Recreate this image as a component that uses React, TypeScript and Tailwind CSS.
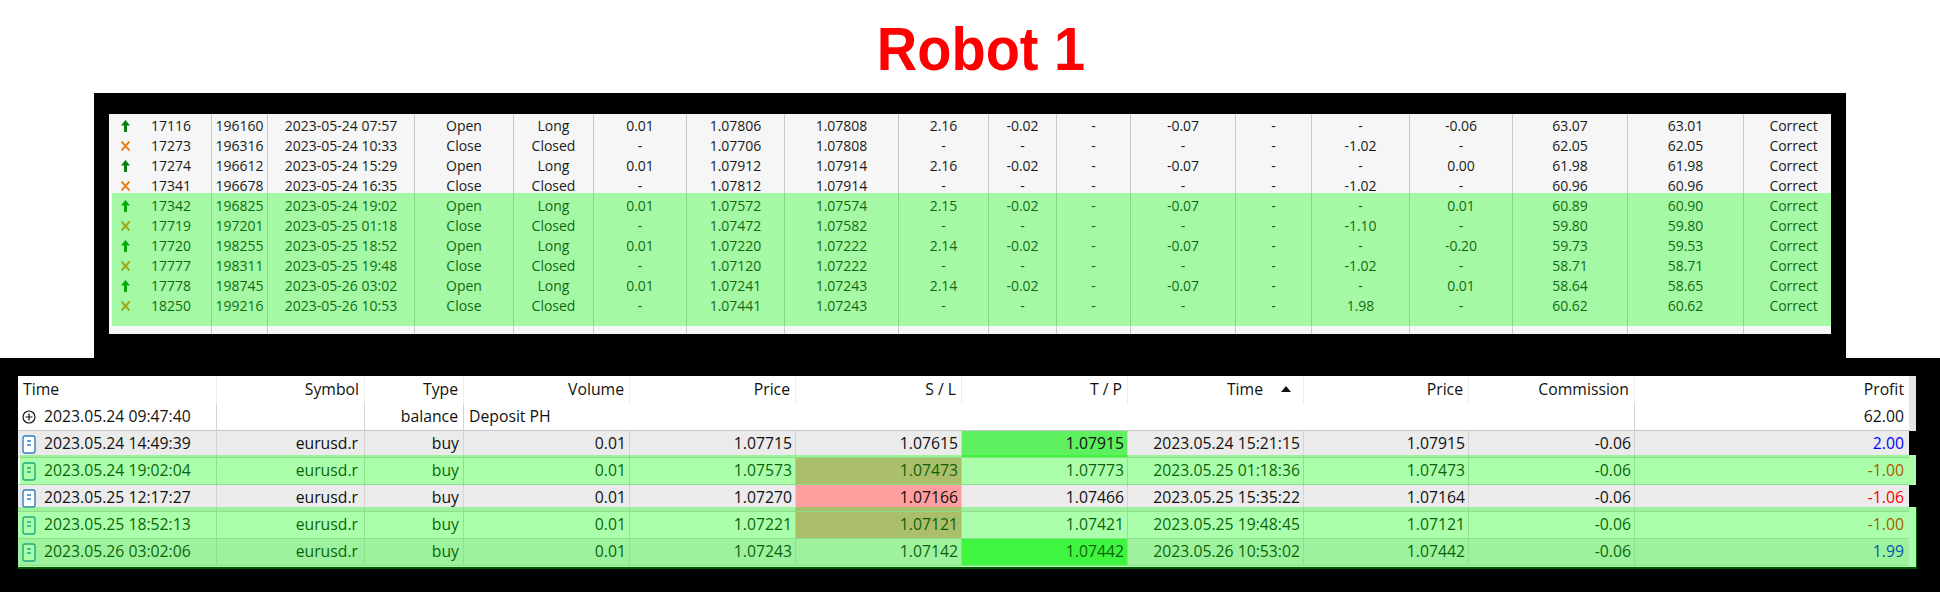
const topCols =
  'grid grid-cols-[103px_56px_147px_99px_80px_93px_98px_114px_90px_68px_74px_105px_76px_98px_103px_115px_116px_100px]';
const bottomCols =
  'grid grid-cols-[199px_148px_99px_166px_166px_166px_166px_176px_165px_166px_274px]';

const orders = [
  ['17116', '196160', '2023-05-24 07:57', 'Open', 'Long', '0.01', '1.07806', '1.07808', '2.16', '-0.02', '-', '-0.07', '-', '-', '-0.06', '63.07', '63.01', 'Correct'],
  ['17273', '196316', '2023-05-24 10:33', 'Close', 'Closed', '-', '1.07706', '1.07808', '-', '-', '-', '-', '-', '-1.02', '-', '62.05', '62.05', 'Correct'],
  ['17274', '196612', '2023-05-24 15:29', 'Open', 'Long', '0.01', '1.07912', '1.07914', '2.16', '-0.02', '-', '-0.07', '-', '-', '0.00', '61.98', '61.98', 'Correct'],
  ['17341', '196678', '2023-05-24 16:35', 'Close', 'Closed', '-', '1.07812', '1.07914', '-', '-', '-', '-', '-', '-1.02', '-', '60.96', '60.96', 'Correct'],
  ['17342', '196825', '2023-05-24 19:02', 'Open', 'Long', '0.01', '1.07572', '1.07574', '2.15', '-0.02', '-', '-0.07', '-', '-', '0.01', '60.89', '60.90', 'Correct'],
  ['17719', '197201', '2023-05-25 01:18', 'Close', 'Closed', '-', '1.07472', '1.07582', '-', '-', '-', '-', '-', '-1.10', '-', '59.80', '59.80', 'Correct'],
  ['17720', '198255', '2023-05-25 18:52', 'Open', 'Long', '0.01', '1.07220', '1.07222', '2.14', '-0.02', '-', '-0.07', '-', '-', '-0.20', '59.73', '59.53', 'Correct'],
  ['17777', '198311', '2023-05-25 19:48', 'Close', 'Closed', '-', '1.07120', '1.07222', '-', '-', '-', '-', '-', '-1.02', '-', '58.71', '58.71', 'Correct'],
  ['17778', '198745', '2023-05-26 03:02', 'Open', 'Long', '0.01', '1.07241', '1.07243', '2.14', '-0.02', '-', '-0.07', '-', '-', '0.01', '58.64', '58.65', 'Correct'],
  ['18250', '199216', '2023-05-26 10:53', 'Close', 'Closed', '-', '1.07441', '1.07243', '-', '-', '-', '-', '-', '1.98', '-', '60.62', '60.62', 'Correct'],
];

const deals = [
  { time: '2023.05.24 14:49:39', price: '1.07715', sl: '1.07615', tp: '1.07915', closed: '2023.05.24 15:21:15', out: '1.07915', profit: '2.00', hit: 'tp', gray: true },
  { time: '2023.05.24 19:02:04', price: '1.07573', sl: '1.07473', tp: '1.07773', closed: '2023.05.25 01:18:36', out: '1.07473', profit: '-1.00', hit: 'sl', gray: false },
  { time: '2023.05.25 12:17:27', price: '1.07270', sl: '1.07166', tp: '1.07466', closed: '2023.05.25 15:35:22', out: '1.07164', profit: '-1.06', hit: 'sl', gray: true },
  { time: '2023.05.25 18:52:13', price: '1.07221', sl: '1.07121', tp: '1.07421', closed: '2023.05.25 19:48:45', out: '1.07121', profit: '-1.00', hit: 'sl', gray: false },
  { time: '2023.05.26 03:02:06', price: '1.07243', sl: '1.07142', tp: '1.07442', closed: '2023.05.26 10:53:02', out: '1.07442', profit: '1.99', hit: 'tp', gray: true },
];

function UpArrow() {
  return (
    <svg width="9" height="12" viewBox="0 0 9 12" className="shrink-0">
      <path d="M4.5 0 L9 5.5 L6 5.5 L6 12 L3 12 L3 5.5 L0 5.5 Z" fill="#0a7d0a" />
    </svg>
  );
}

function CrossIcon() {
  return (
    <svg width="9" height="10" viewBox="0 0 9 10" className="shrink-0">
      <path d="M0.5 0.5 L8.5 9.5 M8.5 0.5 L0.5 9.5" stroke="#e8821e" strokeWidth="2" fill="none" />
    </svg>
  );
}

function DealIcon() {
  return (
    <svg width="14" height="19" viewBox="0 0 14 19" className="shrink-0">
      <rect x="1" y="1" width="12" height="17" rx="2" fill="#ffffff" stroke="#2f7fc1" strokeWidth="1.4" />
      <path d="M5 6 H9 M5 10 H9" stroke="#2f7fc1" strokeWidth="1.4" />
    </svg>
  );
}

function BalanceIcon() {
  return (
    <svg width="14" height="14" viewBox="0 0 14 14" className="shrink-0">
      <circle cx="7" cy="7" r="6" fill="none" stroke="#111111" strokeWidth="1.2" />
      <path d="M3.5 7 H10.5 M7 3.5 V10.5" stroke="#111111" strokeWidth="1.2" />
    </svg>
  );
}

function Spacer({ height }: { height: string }) {
  return (
    <div className={`${topCols} ${height}`}>
      {Array.from({ length: 18 }).map((_, i) => (
        <div key={i} className="border-r border-[#c8c8c8]" />
      ))}
    </div>
  );
}

function OrderRow({ row }: { row: string[] }) {
  const [id, ...rest] = row;
  return (
    <div className={`${topCols} h-5 text-[14px] leading-5 text-[#1a1a1a]`}>
      <div className="flex items-center border-r border-[#c8c8c8] pl-[12px]">
        {row[3] === 'Open' ? <UpArrow /> : <CrossIcon />}
        <span className="ml-[21px]">{id}</span>
      </div>
      {rest.map((cell, i) => (
        <div key={i} className="border-r border-[#c8c8c8] text-center whitespace-nowrap">
          {cell}
        </div>
      ))}
    </div>
  );
}

function Num({
  children,
  className = '',
  pad = 'pr-[5px]',
}: {
  children?: React.ReactNode;
  className?: string;
  pad?: string;
}) {
  return (
    <div className={`flex items-center justify-end border-r border-[#d4d4d4] whitespace-nowrap ${pad} ${className}`}>
      {children}
    </div>
  );
}

function DealRow({ deal }: { deal: (typeof deals)[number] }) {
  const hitColor = deal.hit === 'tp' ? 'bg-[#5ef05e]' : 'bg-[#ff9e9e]';
  const profitColor = deal.profit.startsWith('-') ? 'text-[#ff0000]' : 'text-[#0000ff]';
  return (
    <div className={`${bottomCols} h-[27px] border-b border-[#cfcfcf] ${deal.gray ? 'bg-[#ebebeb]' : 'bg-white'}`}>
      <div className="flex items-center gap-[8px] border-r border-[#d4d4d4] pl-[4px]">
        <DealIcon />
        <span>{deal.time}</span>
      </div>
      <Num pad="pr-[6px]">eurusd.r</Num>
      <Num pad="pr-[4px]">buy</Num>
      <Num pad="pr-[3px]">0.01</Num>
      <Num pad="pr-[3px]">{deal.price}</Num>
      <Num pad="pr-[3px]" className={deal.hit === 'sl' ? hitColor : ''}>{deal.sl}</Num>
      <Num pad="pr-[3px]" className={deal.hit === 'tp' ? hitColor : ''}>{deal.tp}</Num>
      <Num pad="pr-[3px]">{deal.closed}</Num>
      <Num pad="pr-[3px]">{deal.out}</Num>
      <Num pad="pr-[3px]">-0.06</Num>
      <Num className={`border-r-0 ${profitColor}`}>{deal.profit}</Num>
    </div>
  );
}

function HeaderRow() {
  const titles = ['Symbol', 'Type', 'Volume', 'Price', 'S / L', 'T / P'];
  return (
    <div className={`${bottomCols} h-[28px] bg-white`}>
      <div className="flex items-center border-r border-[#eeeeee] pl-[5px]">Time</div>
      {titles.map((t) => (
        <Num key={t} className="border-[#eeeeee]">{t}</Num>
      ))}
      <div className="flex items-center justify-end border-r border-[#eeeeee] pr-[12px]">
        <span>Time</span>
        <svg width="10" height="6" viewBox="0 0 10 6" className="ml-[18px] mb-[3px]">
          <path d="M5 0 L10 6 L0 6 Z" fill="#111111" />
        </svg>
      </div>
      <Num className="border-[#eeeeee]">Price</Num>
      <Num className="border-[#eeeeee]">Commission</Num>
      <Num className="border-r-0">Profit</Num>
    </div>
  );
}

function BalanceRow() {
  return (
    <div className={`${bottomCols} h-[27px] border-b border-[#c8c8c8] bg-white`}>
      <div className="flex items-center gap-[8px] border-r border-[#d4d4d4] pl-[4px]">
        <BalanceIcon />
        <span>2023.05.24 09:47:40</span>
      </div>
      <Num />
      <Num>balance</Num>
      <div className="col-span-7 flex items-center border-r border-[#d4d4d4] pl-[5px]">Deposit PH</div>
      <Num className="border-r-0">62.00</Num>
    </div>
  );
}

export default function App() {
  return (
    <div className="h-[592px] w-[1940px] overflow-hidden bg-white font-['Open_Sans',sans-serif]">
      {/* Title */}
      <div className="flex h-[93px] items-center justify-center pt-[4px] pl-[22px] font-['Liberation_Sans',sans-serif] text-[56px] leading-none font-bold text-[#ff0000]">
        <span className="inline-block scale-y-[1.08]">Robot 1</span>
      </div>

      {/* Top table */}
      <div className="ml-[94px] h-[265px] w-[1752px] bg-black px-[15px] pt-[21px]">
        <div className="relative h-[220px] overflow-hidden bg-[#f6f6f6]">
          <Spacer height="h-[2px]" />
          {orders.map((row) => (
            <OrderRow key={row[0]} row={row} />
          ))}
          <Spacer height="h-[18px]" />
          <div className="absolute top-[79px] right-0 left-[3px] h-[133px] bg-[#00ff00]/33" />
        </div>
      </div>

      {/* Bottom table */}
      <div className="h-[234px] bg-black pt-[18px] pl-[18px]">
        <div className="relative flex h-[191px] w-[1898px] text-[15.75px] text-[#111111]">
          <div className="h-full w-[1891px] overflow-hidden bg-white">
            <HeaderRow />
            <BalanceRow />
            {deals.map((deal) => (
              <DealRow key={deal.time} deal={deal} />
            ))}
          </div>
          {/* right edge: only the header and the highlighted rows reach it */}
          <div className="flex h-full w-[7px] flex-col">
            <div className="h-[55px] bg-[#e6e6e6]" />
            <div className="h-[24px] bg-black" />
            <div className="h-[30px] bg-white" />
            <div className="h-[22px] bg-black" />
            <div className="flex-1 bg-white" />
          </div>
          <div className="absolute top-[79px] right-0 left-[2px] h-[30px] bg-[#00ff00]/33" />
          <div className="absolute top-[131px] -right-px -bottom-[2px] left-0 bg-[#00ff00]/33" />
        </div>
      </div>
    </div>
  );
}
